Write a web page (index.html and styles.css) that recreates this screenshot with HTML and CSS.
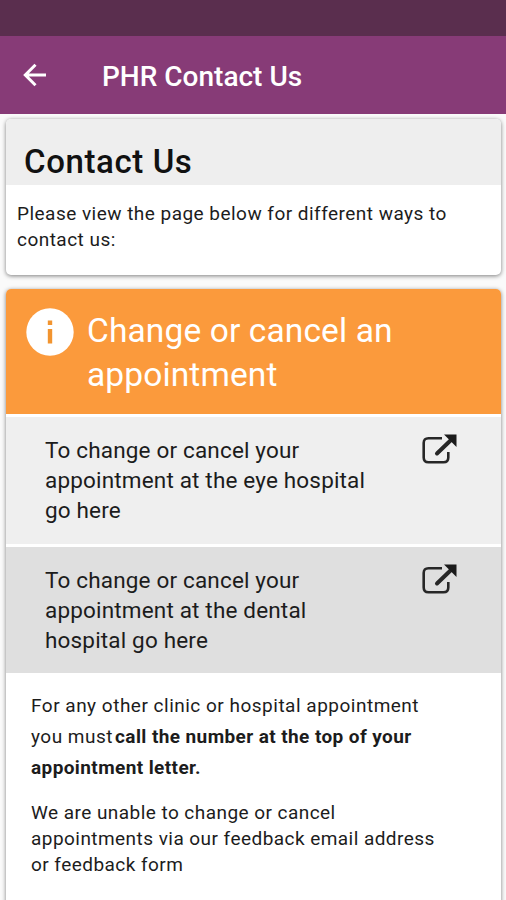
FILE: index.html
```
<!DOCTYPE html>
<html lang="en">
<head>
<meta charset="utf-8">
<title>PHR Contact Us</title>
<link rel="stylesheet" href="styles.css">
</head>
<body>
<div class="status"></div>
<header class="bar">
  <svg class="back" width="24" height="24" viewBox="0 0 24 24"><path d="M23 12H2.500M12.500 1.800L2.300 12l10.200 10.200" fill="none" stroke="#fff" stroke-width="3"/></svg>
  <h1 class="bar-title">PHR Contact Us</h1>
</header>
<main class="content">
  <section class="card intro">
    <h2 class="intro-title">Contact Us</h2>
    <p class="intro-text">Please view the page below for different ways to<br>contact us:</p>
  </section>
  <section class="card change">
    <div class="banner">
      <svg class="info" width="48" height="48" viewBox="0 0 48 48"><circle cx="24" cy="24" r="23.700" fill="#fff"/><path d="M21.800 12.500h4.400v4.400h-4.400zM21.800 21h4.400v14.500h-4.400z" fill="#f2942f"/></svg>
      <h2 class="banner-title">Change or cancel an<br>appointment</h2>
    </div>
    <a class="row">
      <span class="row-text">To change or cancel your<br>appointment at the eye hospital<br>go here</span>
      <svg class="ext" width="36" height="32" viewBox="0 0 36 32"><path d="M20 4.200H6.500Q1.700 4.200 1.700 9v14.500q0 4.800 4.800 4.800h15q4.800 0 4.800-4.800V18" fill="none" stroke="#272727" stroke-width="2.600"/><path d="M15 19.500L29 6" fill="none" stroke="#272727" stroke-width="4" stroke-linecap="round"/><path d="M22 .5H34.500v12.500z" fill="#1b1b1b"/></svg>
    </a>
    <a class="row row-alt">
      <span class="row-text">To change or cancel your<br>appointment at the dental<br>hospital go here</span>
      <svg class="ext" width="36" height="32" viewBox="0 0 36 32"><path d="M20 4.200H6.500Q1.700 4.200 1.700 9v14.500q0 4.800 4.800 4.800h15q4.800 0 4.800-4.800V18" fill="none" stroke="#272727" stroke-width="2.600"/><path d="M15 19.500L29 6" fill="none" stroke="#272727" stroke-width="4" stroke-linecap="round"/><path d="M22 .5H34.500v12.500z" fill="#1b1b1b"/></svg>
    </a>
    <div class="notes">
      <p class="note-main">For any other clinic or hospital appointment<br>you must<b>call the number at the top of your<br>appointment letter.</b></p>
      <p class="note-sub">We are unable to change or cancel<br>appointments via our feedback email address<br>or feedback form</p>
    </div>
  </section>
</main>
</body>
</html>
```
FILE: styles.css
```
* { box-sizing: border-box; margin: 0; padding: 0; }
html, body { height: 900px; overflow: hidden; }
body {
  background: #fafafa;
  color: #1c1c1c;
  font-family: Roboto, sans-serif;
  display: flex;
  flex-direction: column;
  white-space: nowrap;
}
.status { height: 36px; flex: none; background: #5a2e4e; }
.bar {
  height: 78px;
  flex: none;
  display: flex;
  align-items: center;
  padding-left: 23px;
  background: #873b77;
  color: #fff;
}
.back { flex: none; }
.bar-title {
  margin: 3px 0 0 55px;
  font-size: 28px;
  line-height: 36px;
  font-weight: 500;
}
.content {
  padding: 5px 5px 0 6px;
  display: flex;
  flex-direction: column;
  gap: 14px;
}
.card {
  border-radius: 5px;
  overflow: hidden;
  background: #fff;
  box-shadow: 0 1px 4px rgba(0, 0, 0, .5);
}
.intro { height: 156px; }
.intro-title {
  height: 66px;
  padding: 22px 0 0 18px;
  background: #eee;
  color: #111;
  font-size: 33px;
  line-height: 42px;
  font-weight: 500;
  letter-spacing: .6px;
}
.intro-text {
  padding: 16px 0 0 11px;
  font-size: 19px;
  line-height: 26px;
  letter-spacing: .47px;
}
.change { height: 640px; }
.banner {
  height: 125px;
  display: flex;
  padding: 19px 0 0 20px;
  background: #fb9a3c;
  color: #fff;
}
.info { flex: none; }
.banner-title {
  margin: 1px 0 0 13px;
  font-size: 33.500px;
  line-height: 44px;
  font-weight: 400;
  letter-spacing: .12px;
}
.row {
  height: 130px;
  display: flex;
  justify-content: space-between;
  padding: 18px 43px 0 39px;
  background: #efefef;
  border-top: 3px solid #fff;
}
.row-alt { height: 129px; background: #dfdfdf; }
.row-text { font-size: 22.500px; line-height: 30.200px; letter-spacing: .17px; }
.ext { flex: none; margin-top: -1px; }
.notes { padding: 17px 0 0 25px; }
.note-main { font-size: 19px; line-height: 31px; letter-spacing: .5px; }
.note-main b { margin-left: 2px; font-weight: 700; letter-spacing: .4px; }
.note-sub { margin-top: 17px; font-size: 19px; line-height: 26px; letter-spacing: .45px; }
```
